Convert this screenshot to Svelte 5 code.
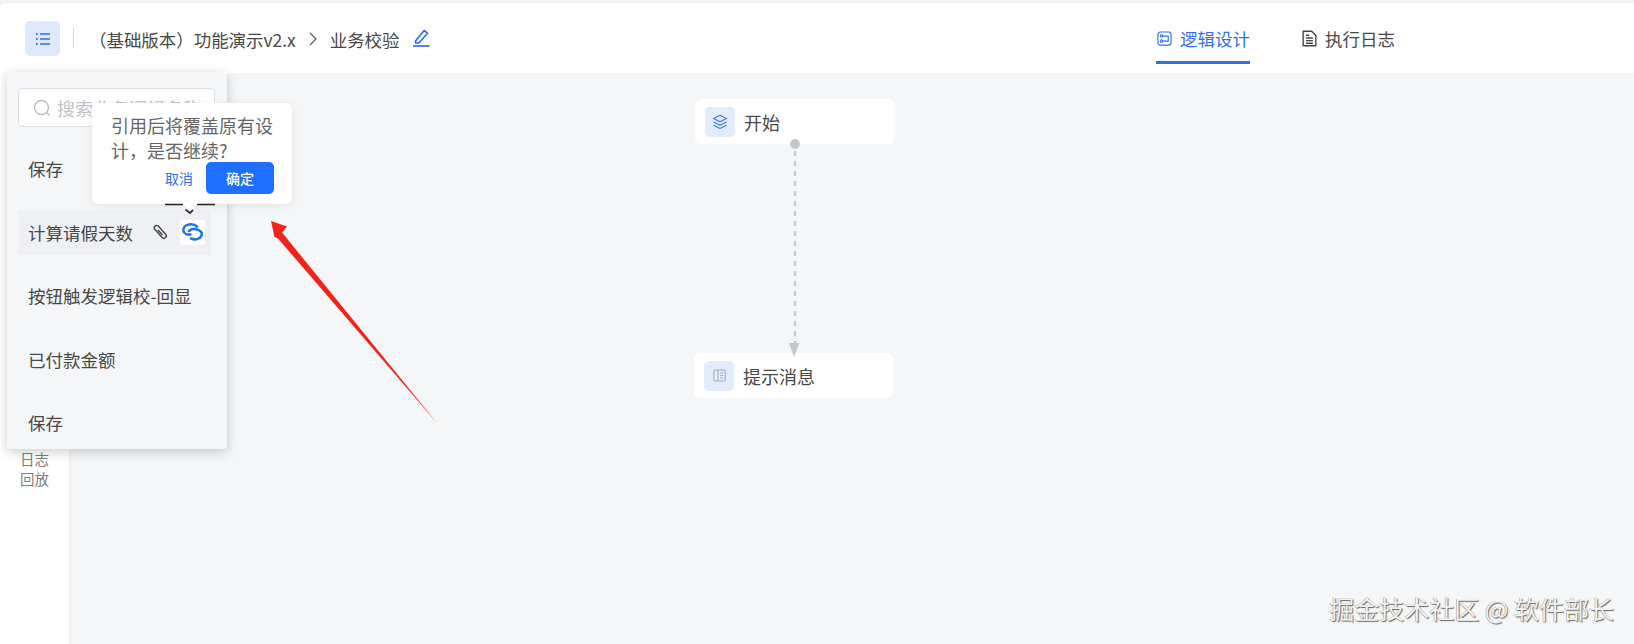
<script>
  const items = ['保存', '计算请假天数', '按钮触发逻辑校-回显', '已付款金额', '保存'];
</script>

<div class="page">
  <header class="topbar">
    <button class="menu-btn" aria-label="menu">
      <svg width="18" height="18" viewBox="0 0 18 18" fill="none" stroke="#2f6fed" stroke-width="1.4">
        <path d="M6 4h10M6 9h10M6 14h10" />
        <path d="M2 4h1.6M2 9h1.6M2 14h1.6" stroke-width="1.8" />
      </svg>
    </button>
    <span class="divider"></span>
    <div class="crumbs">
      <span>（基础版本）功能演示v2.x</span>
      <svg class="chev" width="8" height="14" viewBox="0 0 8 14" fill="none" stroke="#555" stroke-width="1.1"><path d="M1 1l6 6-6 6" /></svg>
      <span>业务校验</span>
      <svg class="edit" width="18" height="19" viewBox="0 0 18 19" fill="none" stroke="#2f6fed" stroke-width="1.7">
        <path d="M3.5 13L12.2 2.5l3.3 2.7L7 15H3.500z" stroke-linejoin="round" />
        <path d="M1 18h16.5" />
      </svg>
    </div>
    <nav class="tabs">
      <div class="tab active">
        <svg width="17" height="17" viewBox="0 0 16 16" fill="none" stroke="#2f6fed" stroke-width="1.2">
          <rect x="1" y="1" width="14" height="14" rx="2.5" />
          <circle cx="4.8" cy="5.4" r="1.3" />
          <circle cx="4.8" cy="10.8" r="1.3" />
          <path d="M6.5 5.4h5.5M6.5 10.8h5.5M12 5.4v5.4" />
        </svg>
        <span>逻辑设计</span>
      </div>
      <div class="tab">
        <svg width="15" height="17" viewBox="0 0 14 16" fill="none" stroke="#444" stroke-width="1.3">
          <path d="M1 1.2h8l4 4v9.6H1z" stroke-linejoin="round" />
          <path d="M3.8 7.5h6.4M3.8 10h6.4M3.8 12.5h6.4M3.8 5h3" />
        </svg>
        <span>执行日志</span>
      </div>
    </nav>
  </header>

  <div class="body">
    <aside class="rail">
      <span class="rail-text">日志<br />回放</span>
    </aside>
    <main class="canvas">
      <div class="node node-start">
        <span class="node-icon">
          <svg width="16" height="16" viewBox="0 0 16 16" fill="none" stroke="#3b78e7" stroke-width="1.2" stroke-linejoin="round">
            <path d="M8 1.2l6.5 3.3L8 7.8 1.5 4.5z" />
            <path d="M1.5 8L8 11.2 14.5 8" />
            <path d="M1.5 11.2L8 14.5l6.5-3.3" />
          </svg>
        </span>
        <span>开始</span>
      </div>
      <div class="node node-msg">
        <span class="node-icon">
          <svg width="13" height="13" viewBox="0 0 13 13" fill="none" stroke="#a3aab8" stroke-width="1.1">
            <rect x="0.8" y="1" width="11.4" height="11" rx="1.5" />
            <path d="M5 1v11M7.2 4h3M7.2 6.5h3M7.2 9h3" />
          </svg>
        </span>
        <span>提示消息</span>
      </div>
      <svg class="edges" width="200" height="300" viewBox="0 0 200 300">
        <circle cx="100" cy="71" r="5" fill="#c4c6cc" />
        <path d="M100 78V270" stroke="#c9cbd0" stroke-width="2.5" stroke-dasharray="5 5" />
        <path d="M94 270h10.5l-5.5 14z" fill="#c4c6cc" />
      </svg>
      <div class="watermark">掘金技术社区 @ 软件部长</div>
    </main>
  </div>

  <div class="panel">
    <div class="search">
      <svg width="18" height="18" viewBox="0 0 18 18" fill="none" stroke="#b8bcc4" stroke-width="1.4">
        <circle cx="8.5" cy="8.5" r="7" />
        <path d="M13.5 13.5l3 3" />
      </svg>
      <span class="placeholder">搜索业务逻辑名称</span>
    </div>
    <ul class="list">
      {#each items as item, i}
        <li class="row" class:hover={i === 1}>
          <span>{item}</span>
          {#if i === 1}
            <svg class="clip" width="17" height="18" viewBox="0 0 17 18" fill="none" stroke="#444" stroke-width="1.4">
              <path d="M3 3.2a2.3 2.3 0 0 1 3.3-.2l7.3 8.2a2.4 2.4 0 0 1-3.500 3.300L2.800 6.300A2.300 2.300 0 0 1 3 3.200z" />
              <path d="M6 7l4.500 5" />
            </svg>
            <span class="ref-tile">
              <svg width="21" height="19" viewBox="0 0 21 19" fill="none" stroke="#2474e8" stroke-width="2.6" stroke-linecap="round">
                <path d="M15 3.500C13 1.500 10 1 7 1.500 3 2.200 1 5 1.500 8 2 10.500 5 12 8.500 11.500" />
                <path d="M7 8C9 6 12.500 5.500 15 6.500c4 1 5.500 3.500 4.500 6-1 3-5.500 5-10.500 3" />
              </svg>
            </span>
          {/if}
        </li>
      {/each}
    </ul>
  </div>

  <div class="popover">
    <p>引用后将覆盖原有设计，是否继续?</p>
    <div class="actions">
      <span class="cancel">取消</span>
      <button class="ok">确定</button>
    </div>
    <svg class="pointer" width="50" height="12" viewBox="0 0 50 12" fill="none">
      <path d="M0 1.5h18M32 1.5h18" stroke="#222" stroke-width="1.5" />
      <path d="M17 0h16l-8 8.5z" fill="#fff" />
      <path d="M20.5 6.5l4.5 3.5 3-3" stroke="#333" stroke-width="1.8" />
    </svg>
  </div>

  <svg class="red-arrow" width="180" height="210" viewBox="0 0 180 210">
    <path d="M1 1L17 6.5 12 12.5 167 203 8 18.5 4.500 17z" fill="#f5211a" />
  </svg>
</div>

<style>
  :global(body) {
    margin: 0;
    background: #fff;
    font-family: "Noto Sans CJK SC", "Liberation Sans", sans-serif;
  }
  .page {
    position: relative;
    width: 1634px;
    height: 644px;
    overflow: hidden;
    display: flex;
    flex-direction: column;
    background: #f1f2f4;
    padding-top: 3px;
    box-sizing: border-box;
    color: #484848;
  }
  .topbar {
    flex: none;
    height: 70px;
    display: flex;
    align-items: center;
    padding-left: 25px;
    background: #fff;
    border-radius: 6px 0 0 0;
    font-size: 17.5px;
    box-sizing: border-box;
  }
  .menu-btn {
    width: 35px;
    height: 35px;
    margin-top: 1px;
    padding: 0;
    border: 0;
    border-radius: 5px;
    background: #dfe9fd;
    display: flex;
    align-items: center;
    justify-content: center;
  }
  .divider {
    width: 1px;
    height: 20px;
    margin: 0 0 0 13px;
    background: #d5d7db;
  }
  .crumbs {
    display: flex;
    align-items: center;
    margin: 2px 0 0 15px;
    white-space: nowrap;
    letter-spacing: -0.05px;
  }
  .chev { margin: 0 13px; }
  .edit { margin: -3px 0 0 12px; }
  .tabs {
    display: flex;
    gap: 52px;
    margin-left: auto;
    margin-right: 238px;
    align-self: flex-start;
  }
  .tab {
    display: flex;
    align-items: center;
    gap: 8px;
    width: 94px;
    height: 61px;
    box-sizing: border-box;
    padding-top: 12px;
    border-bottom: 3px solid transparent;
    white-space: nowrap;
  }
  .tab.active {
    color: #2f6fed;
    border-bottom-color: #2474ee;
    padding-left: 1px;
  }
  .body {
    flex: 1;
    display: flex;
    min-height: 0;
  }
  .rail {
    flex: none;
    width: 70px;
    background: #fff;
    border-right: 1px solid #e9ebef;
    box-sizing: border-box;
  }
  .rail-text {
    display: block;
    margin: 376px 0 0 20px;
    font-size: 14.5px;
    line-height: 20px;
    color: #808080;
  }
  .canvas {
    flex: 1;
    position: relative;
    background: #f4f6f8;
  }
  .node {
    position: absolute;
    width: 200px;
    height: 45px;
    display: flex;
    align-items: center;
    gap: 9px;
    padding-left: 10px;
    box-sizing: border-box;
    background: #fff;
    border-radius: 6px;
    font-size: 18px;
  }
  .node-start { left: 625px; top: 26px; }
  .node-msg { left: 624px; top: 280px; width: 199px; }
  .node-icon {
    width: 30px;
    height: 30px;
    flex: none;
    border-radius: 5px;
    background: #e3ecfd;
    display: flex;
    align-items: center;
    justify-content: center;
  }
  .edges {
    position: absolute;
    left: 625px;
    top: 0;
    overflow: visible;
  }
  .watermark {
    position: absolute;
    right: 20px;
    bottom: 21px;
    font-size: 25px;
    line-height: 30px;
    color: #f2f2f2;
    text-shadow: 1px 1px 1px #666, -0.5px -0.5px 0 #999;
    white-space: nowrap;
  }
  .panel {
    position: absolute;
    left: 7px;
    top: 72px;
    width: 220px;
    height: 377px;
    box-sizing: border-box;
    padding: 16px 0 0 11px;
    background: #f4f6f8;
    border-radius: 3px;
    box-shadow: 0 3px 12px rgba(0, 0, 0, 0.2);
  }
  .search {
    width: 197px;
    height: 39px;
    box-sizing: border-box;
    display: flex;
    align-items: center;
    gap: 6px;
    padding-left: 14px;
    background: #fff;
    border: 1px solid #dcdfe4;
    border-radius: 4px;
    overflow: hidden;
  }
  .placeholder {
    font-size: 18px;
    color: #c0c4cc;
    white-space: nowrap;
  }
  .list {
    list-style: none;
    margin: 19px 0 0;
    padding: 0;
    display: flex;
    flex-direction: column;
    gap: 18.5px;
  }
  .row {
    width: 193px;
    height: 45px;
    box-sizing: border-box;
    padding-left: 10px;
    display: flex;
    align-items: center;
    font-size: 17.5px;
    white-space: nowrap;
    border-radius: 3px;
  }
  .row.hover { background: #eef0f3; }
  .clip { margin-left: 19px; }
  .ref-tile {
    width: 25px;
    height: 25px;
    margin-left: 11px;
    background: #fff;
    border-radius: 3px;
    display: flex;
    align-items: center;
    justify-content: center;
  }
  .popover {
    position: absolute;
    left: 92px;
    top: 103px;
    width: 200px;
    height: 101px;
    box-sizing: border-box;
    padding: 10px 18px 0 19px;
    background: #fff;
    border-radius: 6px;
    box-shadow: 0 2px 10px rgba(0, 0, 0, 0.08);
  }
  .popover p {
    margin: 0;
    font-size: 18px;
    line-height: 25px;
    color: #666;
  }
  .actions {
    display: flex;
    align-items: center;
    justify-content: flex-end;
    gap: 13px;
    margin-top: -1px;
  }
  .cancel {
    font-size: 14px;
    color: #2f6fed;
  }
  .ok {
    width: 68px;
    height: 32px;
    padding: 0;
    border: 0;
    border-radius: 5px;
    background: #1f6fff;
    color: #fff;
    font: 500 14px "Noto Sans CJK SC", sans-serif;
  }
  .pointer {
    position: absolute;
    left: 73px;
    top: 100px;
  }
  .red-arrow {
    position: absolute;
    left: 270px;
    top: 220px;
  }
</style>
